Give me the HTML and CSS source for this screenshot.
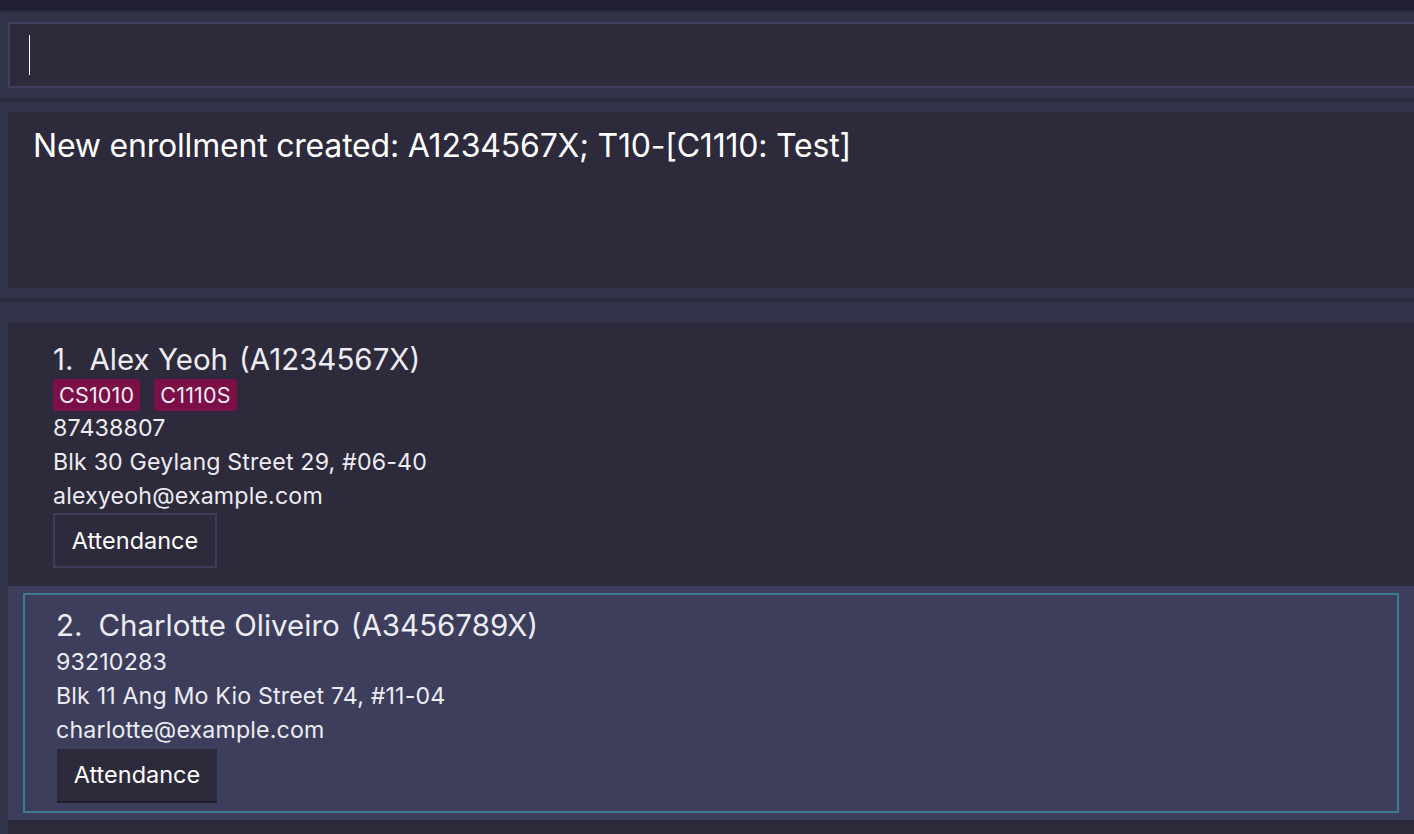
FILE: index.html
```html
<!DOCTYPE html>
<html>
<head>
<meta charset="utf-8">
<link rel="stylesheet" href="styles.css">
</head>
<body>
<div class="app">
  <div class="topbar"></div>
  <div class="band thin"></div>
  <section class="panel command">
    <div class="command-box"><span class="caret"></span></div>
  </section>
  <div class="band"></div>
  <section class="panel result">
    <div class="result-box">New enrollment created: A1234567X; T10-[C1110: Test]</div>
  </section>
  <div class="band"></div>
  <section class="panel list">
    <div class="cell">
      <div class="name-row"><span class="idx">1.</span><span class="nm">Alex Yeoh</span><span class="sid">(A1234567X)</span></div>
      <div class="tags"><span class="tag">CS1010</span><span class="tag">C1110S</span></div>
      <div class="line">87438807</div>
      <div class="line">Blk 30 Geylang Street 29, #06-40</div>
      <div class="line">alexyeoh@example.com</div>
      <div class="btn-row"><span class="btn">Attendance</span></div>
    </div>
    <div class="cell selected">
      <div class="name-row"><span class="idx">2.</span><span class="nm">Charlotte Oliveiro</span><span class="sid">(A3456789X)</span></div>
      <div class="line">93210283</div>
      <div class="line">Blk 11 Ang Mo Kio Street 74, #11-04</div>
      <div class="line">charlotte@example.com</div>
      <div class="btn-row"><span class="btn">Attendance</span></div>
    </div>
    <div class="cell next"></div>
  </section>
</div>
</body>
</html>
```

FILE: styles.css
```css
html, body {
  margin: 0;
  padding: 0;
  background: #313348;
  overflow: hidden;
  height: 834px;
}
.app {
  width: 1414px;
  font-family: Inter, "Open Sans", "Liberation Sans", sans-serif;
  color: #ececf1;
}
.topbar {
  height: 10px;
  background: #201f31;
}
.band {
  height: 4px;
  background: #2b2a3b;
}
.band.thin {
  height: 2px;
}
.panel {
  background: #313348;
}
.command {
  padding: 10px 0 10px 8px;
}
.command-box {
  height: 62px;
  width: 1420px;
  border: 2px solid #403f5f;
  background: #2e2a3c;
  display: flex;
  align-items: center;
  padding-left: 19px;
  box-sizing: content-box;
}
.caret {
  width: 1px;
  height: 40px;
  background: #ffffff;
}
.result {
  padding: 10px 0 10px 8px;
}
.result-box {
  height: 176px;
  width: 1420px;
  background: #2d2a3b;
  box-sizing: border-box;
  padding: 14px 0 0 25px;
  font-size: 32px;
  line-height: 40px;
  color: #ffffff;
  letter-spacing: -0.2px;
}
.list {
  padding: 20px 0 0 8px;
  height: 532px;
  box-sizing: border-box;
}
.cell {
  background: #2d2a3b;
  padding: 18px 0 18px 45px;
  display: flex;
  flex-direction: column;
  position: relative;
}
.cell.selected {
  background: #3d3e5c;
  padding: 20px 0 19px 48px;
}
.cell.selected::after {
  content: "";
  position: absolute;
  left: 15px;
  right: 15px;
  top: 7px;
  bottom: 7px;
  border: 2px solid #3c7b90;
  pointer-events: none;
}
.cell.next {
  height: 40px;
  padding: 0;
}
.name-row {
  display: flex;
  align-items: baseline;
  font-size: 29.5px;
  line-height: 39px;
  height: 39px;
}
.idx {
  margin-right: 16px;
}
.nm {
  margin-right: 11px;
}
.tags {
  display: flex;
  gap: 14px;
  height: 32px;
}
.tag {
  background: #7b0f47;
  border-radius: 3px;
  font-size: 21.5px;
  line-height: 32px;
  padding: 0 6px;
  color: #ececf1;
  letter-spacing: 0.2px;
}
.line {
  font-size: 23.2px;
  line-height: 34px;
  height: 34px;
  letter-spacing: 0.15px;
}
.btn-row {
  display: flex;
}
.btn {
  display: block;
  width: 160px;
  height: 51px;
  border: 2px solid #3d3c5c;
  background: #2d2a3b;
  color: #ffffff;
  font-size: 23.5px;
  line-height: 51px;
  text-align: center;
}
.cell.selected .btn {
  border: none;
  height: 52px;
  line-height: 52px;
  margin-left: 1px;
  margin-top: 2px;
  box-shadow: 0 2px 0 #1f1d2c;
}
```
